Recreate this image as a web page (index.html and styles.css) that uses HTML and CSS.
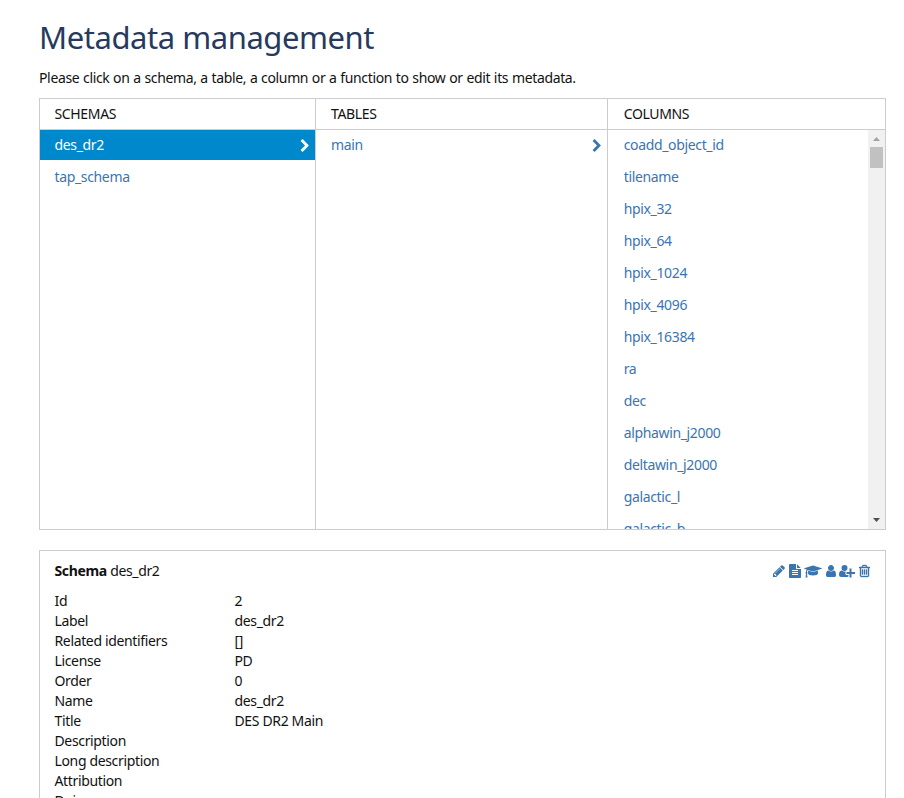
FILE: index.html
```html
<!DOCTYPE html>
<html lang="en">
<head>
<meta charset="utf-8">
<title>Metadata management</title>
<link rel="stylesheet" href="styles.css">
</head>
<body>
<main class="page">
  <h1>Metadata management</h1>
  <p class="intro">Please click on a schema, a table, a column or a function to show or edit its metadata.</p>

  <section class="browser">
    <div class="browser-col">
      <div class="browser-title">SCHEMAS</div>
      <ul class="browser-list">
        <li class="active"><span>des_dr2</span><svg class="chevron" viewBox="0 0 1792 1792"><path d="M1363 877l-742 742q-19 19-45 19t-45-19l-166-166q-19-19-19-45t19-45l531-531-531-531q-19-19-19-45t19-45l166-166q19-19 45-19t45 19l742 742q19 19 19 45t-19 45z"/></svg></li>
        <li><span>tap_schema</span></li>
      </ul>
    </div>
    <div class="browser-col">
      <div class="browser-title">TABLES</div>
      <ul class="browser-list">
        <li><span>main</span><svg class="chevron" viewBox="0 0 1792 1792"><path d="M1363 877l-742 742q-19 19-45 19t-45-19l-166-166q-19-19-19-45t19-45l531-531-531-531q-19-19-19-45t19-45l166-166q19-19 45-19t45 19l742 742q19 19 19 45t-19 45z"/></svg></li>
      </ul>
    </div>
    <div class="browser-col">
      <div class="browser-title">COLUMNS</div>
      <div class="scroll-area">
        <ul class="browser-list">
          <li><span>coadd_object_id</span></li>
          <li><span>tilename</span></li>
          <li><span>hpix_32</span></li>
          <li><span>hpix_64</span></li>
          <li><span>hpix_1024</span></li>
          <li><span>hpix_4096</span></li>
          <li><span>hpix_16384</span></li>
          <li><span>ra</span></li>
          <li><span>dec</span></li>
          <li><span>alphawin_j2000</span></li>
          <li><span>deltawin_j2000</span></li>
          <li><span>galactic_l</span></li>
          <li><span>galactic_b</span></li>
        </ul>
        <div class="scrollbar">
          <svg class="arrow up" viewBox="0 0 17 17"><path d="M5 11h7L8.500 7z"/></svg>
          <div class="thumb"></div>
          <svg class="arrow down" viewBox="0 0 17 17"><path d="M5 6h7L8.500 10z"/></svg>
        </div>
      </div>
    </div>
  </section>

  <section class="details">
    <header class="details-head">
      <div><strong>Schema</strong> des_dr2</div>
      <div class="actions">
        <svg width="12" height="14" viewBox="128 0 1536 1792"><path d="M491 1536l91-91-235-235-91 91v107h128v128h107zm523-928q0-22-22-22-10 0-17 7l-542 542q-7 7-7 17 0 22 22 22 10 0 17-7l542-542q7-7 7-17zm-54-192l416 416-832 832h-416v-416zm683 96q0 53-37 90l-166 166-416-416 166-165q36-38 90-38 53 0 91 38l235 234q37 39 37 91z"/></svg>
        <svg width="12" height="14" viewBox="128 0 1536 1792"><path d="M1596 476q14 14 28 36h-472v-472q22 14 36 28zm-476 164h544v1056q0 40-28 68t-68 28h-1344q-40 0-68-28t-28-68v-1600q0-40 28-68t68-28h800v544q0 40 28 68t68 28zm160 736v-64q0-14-9-23t-23-9h-704q-14 0-23 9t-9 23v64q0 14 9 23t23 9h704q14 0 23-9t9-23zm0-256v-64q0-14-9-23t-23-9h-704q-14 0-23 9t-9 23v64q0 14 9 23t23 9h704q14 0 23-9t9-23zm0-256v-64q0-14-9-23t-23-9h-704q-14 0-23 9t-9 23v64q0 14 9 23t23 9h704q14 0 23-9t9-23z"/></svg>
        <svg width="18" height="14" viewBox="0 0 18 14"><path d="M13.800 6.600l.2 2.900c0 1.200-2.200 2-5 2s-5-.8-5-2l.2-2.900 4.400 1.400q.4.100.8 0zM18 4.500q0 .2-.2.300L9.100 7.500H8.900L3.800 5.900c-.4.400-.7 1.100-.8 2.100q.5.300.5.900 0 .5-.5.800l.5 3.500q0 .3-.3.300H1.700q-.3 0-.2-.3L2 9.700q-.5-.3-.5-.8 0-.6.500-.9.100-1.500.7-2.400L.2 4.800Q0 4.700 0 4.500t.2-.3L8.900 1.500h.2l8.700 2.700q.2.100.2.300z"/></svg>
        <svg width="10" height="14" viewBox="256 0 1280 1792"><path d="M1536 1399q0 109-62.500 187t-150.500 78h-854q-88 0-150.500-78t-62.500-187q0-85 8.500-160.500t31.500-152 58.500-131 94-89 134.500-34.500q131 128 313 128t313-128q76 0 134.500 34.500t94 89 58.500 131 31.500 152 8.500 160.500zm-256-887q0 159-112.500 271.500t-271.500 112.500-271.500-112.500-112.500-271.500 112.500-271.500 271.500-112.500 271.500 112.500 112.500 271.500z"/></svg>
        <svg width="16" height="14" viewBox="0 0 16 14"><path d="M5.500 7a3 3 0 1 1 0-6 3 3 0 0 1 0 6zM12.500 8H16v2h-3.500v3.500h-2V10H7.500V8h3V4.500h2zM6.500 10q0 1 1 1h2v1.600q-.5.400-1.200.4H2.200Q0 13 0 10.900C0 8.800.5 6.500 2.600 6.500c.6 0 1.300 1.100 2.900 1.100.6 0 1-.1 1.500-.4Q6.500 7.500 6.500 8z"/></svg>
        <svg class="trash" width="11" height="14" viewBox="192 0 1408 1792"><path d="M704 736v576q0 14-9 23t-23 9h-64q-14 0-23-9t-9-23v-576q0-14 9-23t23-9h64q14 0 23 9t9 23zm256 0v576q0 14-9 23t-23 9h-64q-14 0-23-9t-9-23v-576q0-14 9-23t23-9h64q14 0 23 9t9 23zm256 0v576q0 14-9 23t-23 9h-64q-14 0-23-9t-9-23v-576q0-14 9-23t23-9h64q14 0 23 9t9 23zm128 724v-948h-896v948q0 22 7 40.500t14.500 27 10.500 8.500h832q3 0 10.500-8.500t14.500-27 7-40.500zm-672-1076h448l-48-117q-7-9-17-11h-317q-10 2-17 11zm928 32v64q0 14-9 23t-23 9h-96v948q0 83-47 143.500t-113 60.500h-832q-66 0-113-58.500t-47-141.500v-952h-96q-14 0-23-9t-9-23v-64q0-14 9-23t23-9h309l70-167q15-37 54-63t79-26h320q40 0 79 26t54 63l70 167h309q14 0 23 9t9 23z"/></svg>
      </div>
    </header>
    <dl class="fields">
      <dt>Id</dt><dd>2</dd>
      <dt>Label</dt><dd>des_dr2</dd>
      <dt>Related identifiers</dt><dd>[]</dd>
      <dt>License</dt><dd>PD</dd>
      <dt>Order</dt><dd>0</dd>
      <dt>Name</dt><dd>des_dr2</dd>
      <dt>Title</dt><dd>DES DR2 Main</dd>
      <dt>Description</dt><dd></dd>
      <dt>Long description</dt><dd></dd>
      <dt>Attribution</dt><dd></dd>
      <dt>Doi</dt><dd></dd>
    </dl>
  </section>
</main>
</body>
</html>
```
FILE: styles.css
```css
* { box-sizing: border-box; }

body {
  margin: 0;
  height: 798px;
  overflow: hidden;
  background: #fff;
  color: #111;
  font: 14px/20px "Noto Sans", sans-serif;
  letter-spacing: -0.35px;
}

.page { width: 847px; margin-left: 39px; padding-top: 18px; }

h1 {
  margin: 0 0 12px;
  color: #263a60;
  font-size: 31px;
  line-height: 38px;
  font-weight: 400;
  letter-spacing: -0.45px;
}

.intro { margin: 0 0 10px; white-space: nowrap; word-spacing: 0.4px; }

.browser {
  display: grid;
  grid-template-columns: 275px 292px 1fr;
  height: 432px;
  border: 1px solid #ccc;
}

.browser-col { min-width: 0; overflow: hidden; }
.browser-col + .browser-col { border-left: 1px solid #ccc; }

.browser-title {
  height: 31px;
  padding: 5px 15px;
  border-bottom: 1px solid #ccc;
}

.browser-list { flex: 1; margin: 0; padding: 0; list-style: none; }

.browser-list li {
  display: flex;
  justify-content: space-between;
  align-items: center;
  height: 30px;
  margin-bottom: 2px;
  padding: 0 3px 0 15px;
  color: #3b75af;
}

.browser-col:first-child .browser-title,
.browser-col:first-child li { padding-left: 14.5px; }

.browser-col:last-child .browser-title,
.browser-col:last-child li { padding-left: 15.7px; }

.browser-list .active { background: #08c; color: #fff; }

.chevron { width: 14px; height: 14px; margin-top: 2px; fill: currentColor; }

.scroll-area { display: flex; height: 399px; overflow: hidden; }

.scrollbar {
  display: flex;
  flex-direction: column;
  width: 17px;
  height: 399px;
  background: #f1f1f1;
}

.arrow { width: 17px; height: 17px; }
.up { fill: #a3a3a3; }
.down { margin-top: auto; fill: #505050; }
.thumb { width: 13px; height: 21px; margin: 0 2px; background: #c1c1c1; }

.details {
  height: 248px;
  margin-top: 20px;
  padding: 10px 15px 0 14.5px;
  border: 1px solid #ccc;
  border-bottom: 0;
  overflow: hidden;
}

.details-head { display: flex; justify-content: space-between; margin-bottom: 10px; }

.actions { display: flex; align-items: center; gap: 3.6px; fill: #3b75af; }
.trash { stroke: #3b75af; stroke-width: 50; }

.fields { display: grid; grid-template-columns: 180px 1fr; grid-auto-rows: 20px; margin: 0; }
.fields dd { margin: 0; }
```
